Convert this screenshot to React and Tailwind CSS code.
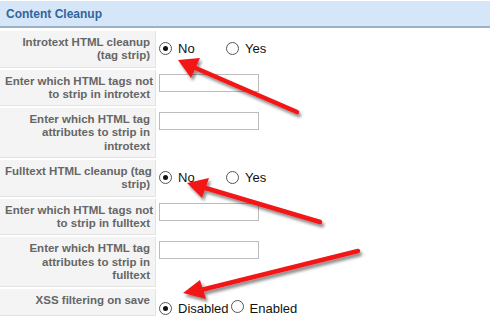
import React from "react";

const rows = [
  { label: ["Introtext HTML cleanup", "(tag strip)"], kind: "radio", opts: ["No", "Yes"] },
  { label: ["Enter which HTML tags not", "to strip in introtext"], kind: "input" },
  { label: ["Enter which HTML tag", "attributes to strip in", "introtext"], kind: "input" },
  { label: ["Fulltext HTML cleanup (tag", "strip)"], kind: "radio", opts: ["No", "Yes"] },
  { label: ["Enter which HTML tags not", "to strip in fulltext"], kind: "input" },
  { label: ["Enter which HTML tag", "attributes to strip in", "fulltext"], kind: "input" },
  { label: ["XSS filtering on save"], kind: "radio2", opts: ["Disabled", "Enabled"] },
];

function Radio({ checked }) {
  return (
    <span className="inline-flex h-[13px] w-[13px] shrink-0 items-center justify-center rounded-full border border-[#555] bg-white">
      {checked && <span className="h-[5px] w-[5px] rounded-full bg-[#111]" />}
    </span>
  );
}

function Arrow({ tail, tip, a, b }) {
  const pts = `${tip[0]},${tip[1]} ${a[0]},${a[1]} ${b[0]},${b[1]}`;
  const mx = (a[0] + b[0]) / 2;
  const my = (a[1] + b[1]) / 2;
  return (
    <g filter="url(#sh)">
      <line x1={tail[0]} y1={tail[1]} x2={mx} y2={my} stroke="#f21414" strokeWidth="4.5" strokeLinecap="round" />
      <polygon points={pts} fill="#f21414" />
    </g>
  );
}

export default function App() {
  return (
    <div className="relative h-[325px] w-[490px] overflow-hidden bg-white" style={{ fontFamily: "'Liberation Sans', Arial, sans-serif" }}>
      <div className="mt-px flex h-[27px] items-center border-b-2 border-[#9bb1c8] bg-[#d5e6f8] pl-[6px] text-[12px] font-bold text-[#31659c]">
        Content Cleanup
      </div>

      <div className="mt-[3px] flex flex-col gap-[2px]">
        {rows.map((r, i) => (
          <div key={i} className="flex">
            <div className="w-[156px] shrink-0 whitespace-nowrap border-r border-b border-[#e3e3e3] bg-[#f4f4f4] px-[5px] pt-[5px] pb-[4px] text-right text-[11.5px] font-bold leading-[13.3px] text-[#666]">
              {r.label.map((l, j) => (
                <div key={j}>{l}</div>
              ))}
            </div>
            <div className="flex-1 pl-[3px]">
              {r.kind === "input" && (
                <div className="mt-[4px] h-[18px] w-[100px] border border-[#bcbcbc] bg-white" />
              )}
              {r.kind === "radio" && (
                <div className="mt-[10px] flex items-center text-[13px] leading-[15px] text-[#111]">
                  <Radio checked />
                  <span className="ml-[6px] w-[48px]">{r.opts[0]}</span>
                  <Radio />
                  <span className="ml-[6px]">{r.opts[1]}</span>
                </div>
              )}
              {r.kind === "radio2" && (
                <div className="mt-[11px] flex items-center text-[13px] leading-[15px] text-[#111]">
                  <Radio checked />
                  <span className="ml-[6px]">{r.opts[0]}</span>
                  <span className="ml-[2px]"><Radio /></span>
                  <span className="ml-[6px]">{r.opts[1]}</span>
                </div>
              )}
            </div>
          </div>
        ))}
      </div>

      <svg className="pointer-events-none absolute left-0 top-0" width="490" height="325">
        <defs>
          <filter id="sh" x="-20%" y="-40%" width="140%" height="180%">
            <feDropShadow dx="2" dy="3" stdDeviation="1.6" floodColor="#000" floodOpacity="0.45" />
          </filter>
        </defs>
        <Arrow tail={[297, 112]} tip={[178, 60]} a={[200, 58]} b={[191, 78]} />
        <Arrow tail={[320, 222]} tip={[187, 183]} a={[209, 178]} b={[202, 198]} />
        <Arrow tail={[358, 251]} tip={[183, 293]} a={[200, 280]} b={[206, 299]} />
      </svg>
    </div>
  );
}
